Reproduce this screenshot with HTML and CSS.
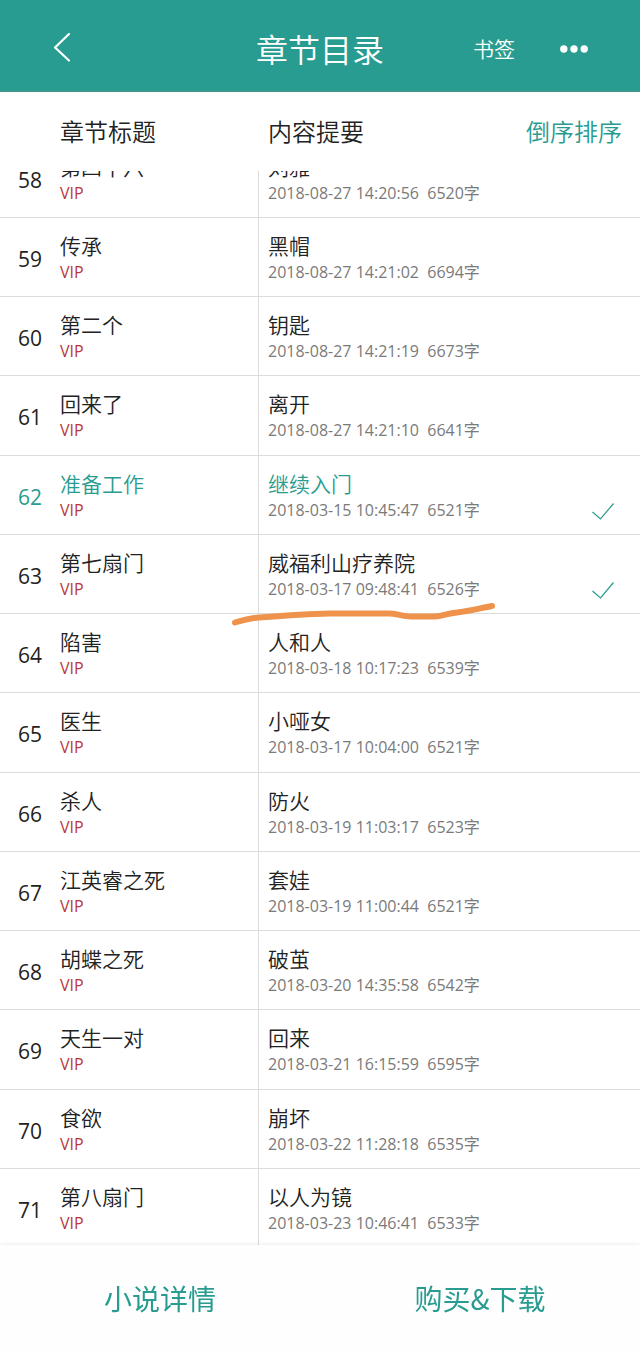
FILE: index.html
```html
<!DOCTYPE html>
<html lang="zh-CN">
<head>
    <meta charset="UTF-8">
    <meta name="viewport" content="width=device-width, initial-scale=1.0">
    <title>章节目录</title>
    <link rel="stylesheet" href="styles.css">
</head>
<body>
    <header class="topbar">
        <button type="button" class="back" aria-label="返回">
            <svg width="20" height="32" viewBox="0 0 20 32"><path d="M17 2 3 15.500 17 28.500" fill="none" stroke="#fff" stroke-width="2.200" stroke-linecap="round" stroke-linejoin="round"/></svg>
        </button>
        <h1>章节目录</h1>
        <div class="actions">
            <button type="button" class="bookmark">书签</button>
            <button type="button" class="more" aria-label="更多">
                <svg width="28" height="10" viewBox="0 0 28 10" fill="#fff"><circle cx="3.800" cy="6" r="3.700"/><circle cx="14" cy="6" r="3.700"/><circle cx="24.200" cy="6" r="3.700"/></svg>
            </button>
        </div>
    </header>

    <main class="list" id="list">
        <table>
            <thead>
                <tr>
                    <th class="num"></th>
                    <th class="name">章节标题</th>
                    <th class="summary">
                        <div class="head">内容提要 <button type="button" class="sort">倒序排序</button></div>
                    </th>
                </tr>
            </thead>
            <tbody>
                <tr>
                    <td class="num">58</td>
                    <td class="name"><p>第四十六</p><span class="vip">VIP</span></td>
                    <td class="summary"><p>刘雅</p><span class="meta">2018-08-27 14:20:56&nbsp; 6520字</span></td>
                </tr>
                <tr>
                    <td class="num">59</td>
                    <td class="name"><p>传承</p><span class="vip">VIP</span></td>
                    <td class="summary"><p>黑帽</p><span class="meta">2018-08-27 14:21:02&nbsp; 6694字</span></td>
                </tr>
                <tr>
                    <td class="num">60</td>
                    <td class="name"><p>第二个</p><span class="vip">VIP</span></td>
                    <td class="summary"><p>钥匙</p><span class="meta">2018-08-27 14:21:19&nbsp; 6673字</span></td>
                </tr>
                <tr>
                    <td class="num">61</td>
                    <td class="name"><p>回来了</p><span class="vip">VIP</span></td>
                    <td class="summary"><p>离开</p><span class="meta">2018-08-27 14:21:10&nbsp; 6641字</span></td>
                </tr>
                <tr class="current">
                    <td class="num">62</td>
                    <td class="name"><p>准备工作</p><span class="vip">VIP</span></td>
                    <td class="summary">
                        <p>继续入门</p><span class="meta">2018-03-15 10:45:47&nbsp; 6521字</span>
                        <svg class="check" width="24" height="18" viewBox="0 0 24 18"><path d="M1.500 10 9.500 17 22.500 1.500"/></svg>
                    </td>
                </tr>
                <tr>
                    <td class="num">63</td>
                    <td class="name"><p>第七扇门</p><span class="vip">VIP</span></td>
                    <td class="summary">
                        <p>威福利山疗养院</p><span class="meta">2018-03-17 09:48:41&nbsp; 6526字</span>
                        <svg class="check" width="24" height="18" viewBox="0 0 24 18"><path d="M1.500 10 9.500 17 22.500 1.500"/></svg>
                        <svg class="underline" width="264" height="24" viewBox="0 0 264 24"><path d="M4 19.500C12 17 20 15 28 14.500 48 13 76 11 98 10.500H158C165 10.500 172 13.500 180 13.500H204C211 13.500 217 10 226 9.500 238 8 250 5 261 3"/></svg>
                    </td>
                </tr>
                <tr>
                    <td class="num">64</td>
                    <td class="name"><p>陷害</p><span class="vip">VIP</span></td>
                    <td class="summary"><p>人和人</p><span class="meta">2018-03-18 10:17:23&nbsp; 6539字</span></td>
                </tr>
                <tr>
                    <td class="num">65</td>
                    <td class="name"><p>医生</p><span class="vip">VIP</span></td>
                    <td class="summary"><p>小哑女</p><span class="meta">2018-03-17 10:04:00&nbsp; 6521字</span></td>
                </tr>
                <tr>
                    <td class="num">66</td>
                    <td class="name"><p>杀人</p><span class="vip">VIP</span></td>
                    <td class="summary"><p>防火</p><span class="meta">2018-03-19 11:03:17&nbsp; 6523字</span></td>
                </tr>
                <tr>
                    <td class="num">67</td>
                    <td class="name"><p>江英睿之死</p><span class="vip">VIP</span></td>
                    <td class="summary"><p>套娃</p><span class="meta">2018-03-19 11:00:44&nbsp; 6521字</span></td>
                </tr>
                <tr>
                    <td class="num">68</td>
                    <td class="name"><p>胡蝶之死</p><span class="vip">VIP</span></td>
                    <td class="summary"><p>破茧</p><span class="meta">2018-03-20 14:35:58&nbsp; 6542字</span></td>
                </tr>
                <tr>
                    <td class="num">69</td>
                    <td class="name"><p>天生一对</p><span class="vip">VIP</span></td>
                    <td class="summary"><p>回来</p><span class="meta">2018-03-21 16:15:59&nbsp; 6595字</span></td>
                </tr>
                <tr>
                    <td class="num">70</td>
                    <td class="name"><p>食欲</p><span class="vip">VIP</span></td>
                    <td class="summary"><p>崩坏</p><span class="meta">2018-03-22 11:28:18&nbsp; 6535字</span></td>
                </tr>
                <tr>
                    <td class="num">71</td>
                    <td class="name"><p>第八扇门</p><span class="vip">VIP</span></td>
                    <td class="summary"><p>以人为镜</p><span class="meta">2018-03-23 10:46:41&nbsp; 6533字</span></td>
                </tr>
            </tbody>
        </table>
    </main>

    <footer class="bottombar">
        <button type="button">小说详情</button>
        <button type="button">购买&amp;下载</button>
    </footer>

    <script>
        // open the list a little way into the first chapter
        document.getElementById('list').scrollTop = 32;
    </script>
</body>
</html>
```
FILE: styles.css
```css
* {
    box-sizing: border-box;
}
body {
    margin: 0;
    height: 100vh;
    display: flex;
    flex-direction: column;
    font-family: "Noto Sans CJK SC", sans-serif;
    font-weight: 350;
    background-color: #fff;
    color: #222;
}
button {
    padding: 0;
    border: none;
    background: none;
    font-family: inherit;
    font-weight: inherit;
    color: inherit;
    cursor: pointer;
}
svg {
    display: block;
}
h1, p {
    margin: 0;
    font-weight: inherit;
}

/* top bar */
.topbar {
    display: grid;
    grid-template-columns: 1fr auto 1fr;
    align-items: center;
    padding: 5px 52px 0;
    height: 92px;
    flex-shrink: 0;
    background-color: #289c90;
    border-bottom: 1px solid #4a9389;
    color: #fff;
}
.back {
    justify-self: start;
}
.topbar h1 {
    font-size: 32px;
    line-height: 40px;
}
.actions {
    display: flex;
    align-items: center;
    justify-content: flex-end;
    gap: 45px;
}
.bookmark {
    font-size: 21px;
    line-height: 26px;
}

/* chapter list */
.list {
    flex: 1;
    min-height: 0;
    overflow-y: auto;
    scrollbar-width: none;
}
table {
    width: 100%;
    table-layout: fixed;
    border-spacing: 0;
}
th, td {
    padding: 0;
    text-align: left;
    vertical-align: top;
}
th {
    position: sticky;
    top: 0;
    z-index: 2;
    height: 79px;
    padding-bottom: 2px;
    vertical-align: middle;
    background-color: #fff;
    font-size: 24px;
    line-height: 32px;
    font-weight: inherit;
}
.head {
    display: flex;
    justify-content: space-between;
    padding-right: 18px;
}
.sort {
    font-size: 24px;
    line-height: 32px;
    color: #289c90;
}
td {
    height: 79px;
    padding-top: 14px;
    border-bottom: 1px solid #dcdcdc;
}
tr:nth-child(4n) td {
    height: 80px;
}
.num {
    width: 60px;
}
td.num {
    padding-left: 18px;
    padding-top: 28px;
    font-size: 21px;
    line-height: 26px;
}
.name {
    width: 199px;
}
td.name {
    border-right: 1px solid #dcdcdc;
}
.summary {
    padding-left: 9px;
}
td.summary {
    position: relative;
}
td p {
    font-size: 21px;
    line-height: 26px;
}
.vip, .meta {
    display: block;
    font-size: 16px;
    line-height: 28px;
}
td.num, .vip, .meta {
    font-family: "Open Sans", "Noto Sans CJK SC", sans-serif;
    font-weight: 400;
}
.vip {
    color: #bb3638;
}
.meta {
    color: #7a7a7a;
}
.current .num, .current p {
    color: #289c90;
}
.check {
    position: absolute;
    right: 25px;
    bottom: 14px;
    fill: none;
    stroke: #289c90;
    stroke-width: 1.2;
}
.underline {
    position: absolute;
    left: -28px;
    bottom: -14px;
    z-index: 1;
    fill: none;
    stroke: #ee924c;
    stroke-width: 6;
    stroke-linecap: round;
}

/* bottom bar */
.bottombar {
    position: relative;
    z-index: 3;
    display: grid;
    grid-template-columns: 1fr 1fr;
    height: 106px;
    flex-shrink: 0;
    background-color: #fefefe;
    box-shadow: 0 -1px 4px rgba(0,0,0,0.08);
}
.bottombar button {
    font-size: 28px;
    font-weight: 400;
    color: #289c90;
}
```
